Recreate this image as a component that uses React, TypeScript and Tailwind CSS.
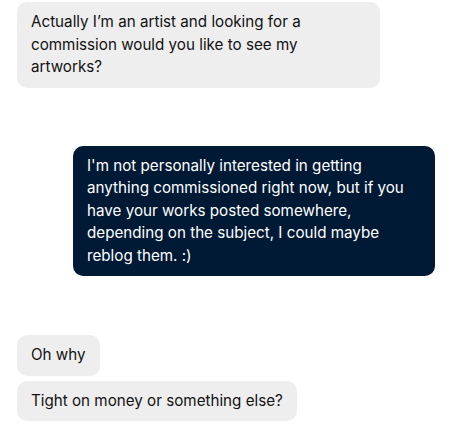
export default function App() {
  const gray = "max-w-[363px] w-fit rounded-[10px] bg-[#eeeeee] px-[14px] py-[9px] text-[#121212]";
  return (
    <div
      className="flex flex-col items-start bg-white px-[17px] pt-[2px] text-[15.2px] leading-[22.5px]"
      style={{ fontFamily: "Inter, 'Noto Sans', sans-serif" }}
    >
      <div className={gray}>Actually I’m an artist and looking for a commission would you like to see my artworks?</div>

      <div className="mt-[58px] max-w-[362px] w-fit self-end rounded-[10px] bg-[#001935] px-[14px] py-[9px] text-white">
        I'm not personally interested in getting anything commissioned right now, but if you have your works posted somewhere, depending on the subject, I could maybe reblog them. :)
      </div>

      <div className={`mt-[59px] ${gray}`}>Oh why</div>
      <div className={`mt-[5px] ${gray}`}>Tight on money or something else?</div>
    </div>
  );
}
